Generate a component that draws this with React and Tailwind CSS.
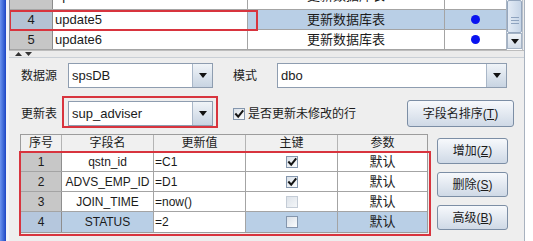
import React from "react";

const F = "font-['Liberation_Sans','Noto_Sans_CJK_SC',sans-serif]";

function Tri({ className = "" }) {
  return (
    <svg width="8" height="5" viewBox="0 0 8 5" className={className}>
      <path d="M0 0 L8 0 L4 5 Z" fill="#111" />
    </svg>
  );
}

function Check({ checked, disabled }) {
  return (
    <div
      className={
        "w-[12px] h-[12px] border flex items-center justify-center " +
        (disabled
          ? "border-[#c4ccd6] bg-linear-to-br from-[#dde3ea] to-[#f4f6f8]"
          : "border-[#8496ad] bg-linear-to-br from-[#d9e0e8] to-[#fbfcfd]")
      }
    >
      {checked && (
        <svg width="10" height="10" viewBox="0 0 10 10">
          <path d="M2 5.2 L4.2 7.6 L8.6 2.2" fill="none" stroke="#151515" strokeWidth="2" strokeLinecap="square" />
        </svg>
      )}
    </div>
  );
}

function Combo({ value, width }) {
  return (
    <div className={`flex h-[25px] border border-[#8e9db0] bg-white ${width}`}>
      <div className="flex-1 flex items-center pl-[3px] text-[13px]">{value}</div>
      <div className="w-[20px] border-l border-[#a9b7c8] bg-linear-to-b from-[#f0f4f8] to-[#c8d4e2] flex items-center justify-center">
        <Tri />
      </div>
    </div>
  );
}

function Btn({ label, m, className = "" }) {
  return (
    <div
      className={`flex items-center justify-center border border-[#7c8ea5] rounded-[3px] bg-linear-to-b from-[#f7f9fc] to-[#cfd9e6] text-[12px] ${className}`}
    >
      {label}(<span className="underline">{m}</span>)
    </div>
  );
}

const rows = [
  { n: "1", name: "qstn_id", val: "=C1", key: true },
  { n: "2", name: "ADVS_EMP_ID", val: "=D1", key: true },
  { n: "3", name: "JOIN_TIME", val: "=now()", key: false, dis: true },
  { n: "4", name: "STATUS", val: "=2", key: false, sel: true },
];

function TopRow({ n, name, sel, dot = true, up = "" }) {
  return (
    <div className="flex h-[20px] border-b border-[#a4a4a4] text-[13px]">
      <div
        className={`w-[43px] border-r border-[#8c8c8c] flex items-center justify-center ${up} ${
          sel ? "bg-[#b4c2d4]" : "bg-[#c6c6c6]"
        }`}
      >
        {n}
      </div>
      <div className={`w-[195px] border-r border-[#a4a4a4] bg-white flex items-center pl-[2px] ${up}`}>{name}</div>
      <div
        className={`w-[197px] border-r border-[#a4a4a4] flex items-center justify-center ${up} ${
          sel ? "bg-[#b9cfe6]" : "bg-white"
        }`}
      >
        更新数据库表
      </div>
      <div className={`w-[61px] flex items-center justify-center ${sel ? "bg-[#b9cfe6]" : "bg-white"}`}>
        {dot && <div className="w-[9px] h-[9px] rounded-full bg-[#0a14f0]" />}
      </div>
    </div>
  );
}

export default function App() {
  return (
    <div className={`w-[533px] h-[241px] overflow-hidden bg-white flex text-[#1b1b1b] ${F}`}>
      <div className="w-[6px] h-full bg-linear-to-r from-[#6a92ee] to-[#1d44c4]" />
      <div className="w-[3px] h-full bg-[#f2f4f8]" />
      <div className="w-[516px] flex flex-col border-r border-[#a8b2bf]">
        {/* top pane */}
        <div className="h-[50px] flex overflow-hidden">
          <div className="w-[497px] border-l border-[#8a9099] overflow-hidden">
            <div className="-mt-[10px]">
              <TopRow n="3" name="update4" dot={false} up="pb-[7px]" />
            </div>
            <div className="relative">
              <TopRow n="4" name="update5" sel />
              <div className="absolute left-[-1px] top-[0px] w-[249px] h-[21px] border-2 border-[#d8343e]" />
            </div>
            <TopRow n="5" name="update6" />
          </div>
          <div className="w-[16px] flex flex-col border-l border-[#a9b5c4]">
            <div className="h-[33px] border border-[#95a7be] rounded-[2px] bg-linear-to-r from-[#e3ebf5] to-[#c6d5e7] flex flex-col items-center justify-center gap-[2px] pt-[8px]">
              <div className="w-[8px] h-px bg-[#8ea3bf]" />
              <div className="w-[8px] h-px bg-[#8ea3bf]" />
              <div className="w-[8px] h-px bg-[#8ea3bf]" />
            </div>
            <div className="h-[16px] border border-[#a4b3c5] bg-linear-to-b from-[#f1f4f8] to-[#d2dce8] flex items-center justify-center">
              <Tri />
            </div>
          </div>
          <div className="flex-1 bg-[#ececec] border-l border-[#b8c0ca]" />
        </div>
        {/* splitter */}
        <div className="h-[7px] bg-[#ebebeb] border-t border-[#bdbdbd] flex items-center pl-[6px] gap-[3px]">
          <svg width="7" height="4" viewBox="0 0 7 4">
            <path d="M0 4 L7 4 L3.5 0 Z" fill="#333" />
          </svg>
          <svg width="7" height="4" viewBox="0 0 7 4">
            <path d="M0 0 L7 0 L3.5 4 Z" fill="#333" />
          </svg>
        </div>
        {/* lower panel */}
        <div className="flex-1 bg-[#eeeeee] border-t border-[#c9cfd6] pl-[12px] flex flex-col">
          <div className="mt-[5px] h-[25px] flex items-center">
            <div className="w-[47px] text-[12px]">数据源</div>
            <Combo value="spsDB" width="w-[145px]" />
            <div className="ml-[20px] w-[44px] text-[12px]">模式</div>
            <Combo value="dbo" width="w-[230px]" />
          </div>
          <div className="mt-[12px] h-[27px] flex items-center">
            <div className="w-[47px] text-[12px]">更新表</div>
            <div className="relative">
              <Combo value="sup_adviser" width="w-[145px]" />
              <div className="absolute left-[-6px] top-[-5px] w-[156px] h-[32px] border-2 border-[#d8343e]" />
            </div>
            <div className="ml-[20px] flex items-center gap-[3px] text-[12px]">
              <Check checked />
              <span>是否更新未修改的行</span>
            </div>
            <Btn label="字段名排序" m="T" className="ml-auto mr-[10px] w-[107px] h-[27px]" />
          </div>
          <div className="mt-[7px] flex">
            <div className="relative -ml-px w-[408px] border border-[#9c9c9c] bg-white self-start">
              <div className="flex h-[17px] bg-[#f0f0f0] border-b border-[#a0a0a0] text-[12px]">
                <div className="w-[41px] border-r border-[#b4b4b4] flex items-center justify-center">序号</div>
                <div className="w-[92px] border-r border-[#b4b4b4] flex items-center justify-center">字段名</div>
                <div className="w-[92px] border-r border-[#b4b4b4] flex items-center justify-center">更新值</div>
                <div className="w-[92px] border-r border-[#b4b4b4] flex items-center justify-center">主键</div>
                <div className="flex-1 flex items-center justify-center">参数</div>
              </div>
              {rows.map((r, i) => (
                <div
                  key={r.n}
                  className={`flex h-[20px] text-[12px] ${i < 3 ? "border-b border-[#a4a4a4]" : ""}`}
                >
                  <div
                    className={`w-[41px] border-r border-[#8e8e8e] flex items-center justify-center ${
                      r.sel ? "bg-[#b5c7dd]" : "bg-[#c7c7c7]"
                    }`}
                  >
                    {r.n}
                  </div>
                  <div
                    className={`w-[92px] border-r border-[#a4a4a4] flex items-center justify-center ${
                      r.sel ? "bg-[#b9cfe6]" : ""
                    }`}
                  >
                    {r.name}
                  </div>
                  <div className="w-[92px] border-r border-[#a4a4a4] flex items-center pl-[1px]">{r.val}</div>
                  <div
                    className={`w-[92px] border-r border-[#a4a4a4] flex items-center justify-center ${
                      r.sel ? "bg-[#b9cfe6]" : ""
                    }`}
                  >
                    <Check checked={r.key} disabled={r.dis} />
                  </div>
                  <div
                    className={`flex-1 flex items-center justify-center text-[13px] ${
                      r.sel ? "bg-[#b9cfe6]" : ""
                    }`}
                  >
                    默认
                  </div>
                </div>
              ))}
              <div className="absolute left-[-2px] top-[16px] w-[412px] h-[85px] border-2 border-[#d8343e]" />
            </div>
            <div className="ml-[9px] w-[71px] flex flex-col">
              <Btn label="增加" m="Z" className="mt-[4px] h-[26px]" />
              <Btn label="删除" m="S" className="mt-[8px] h-[25px]" />
              <Btn label="高级" m="B" className="mt-[8px] h-[25px]" />
            </div>
          </div>
        </div>
      </div>
      <div className="flex-1 bg-white" />
    </div>
  );
}
